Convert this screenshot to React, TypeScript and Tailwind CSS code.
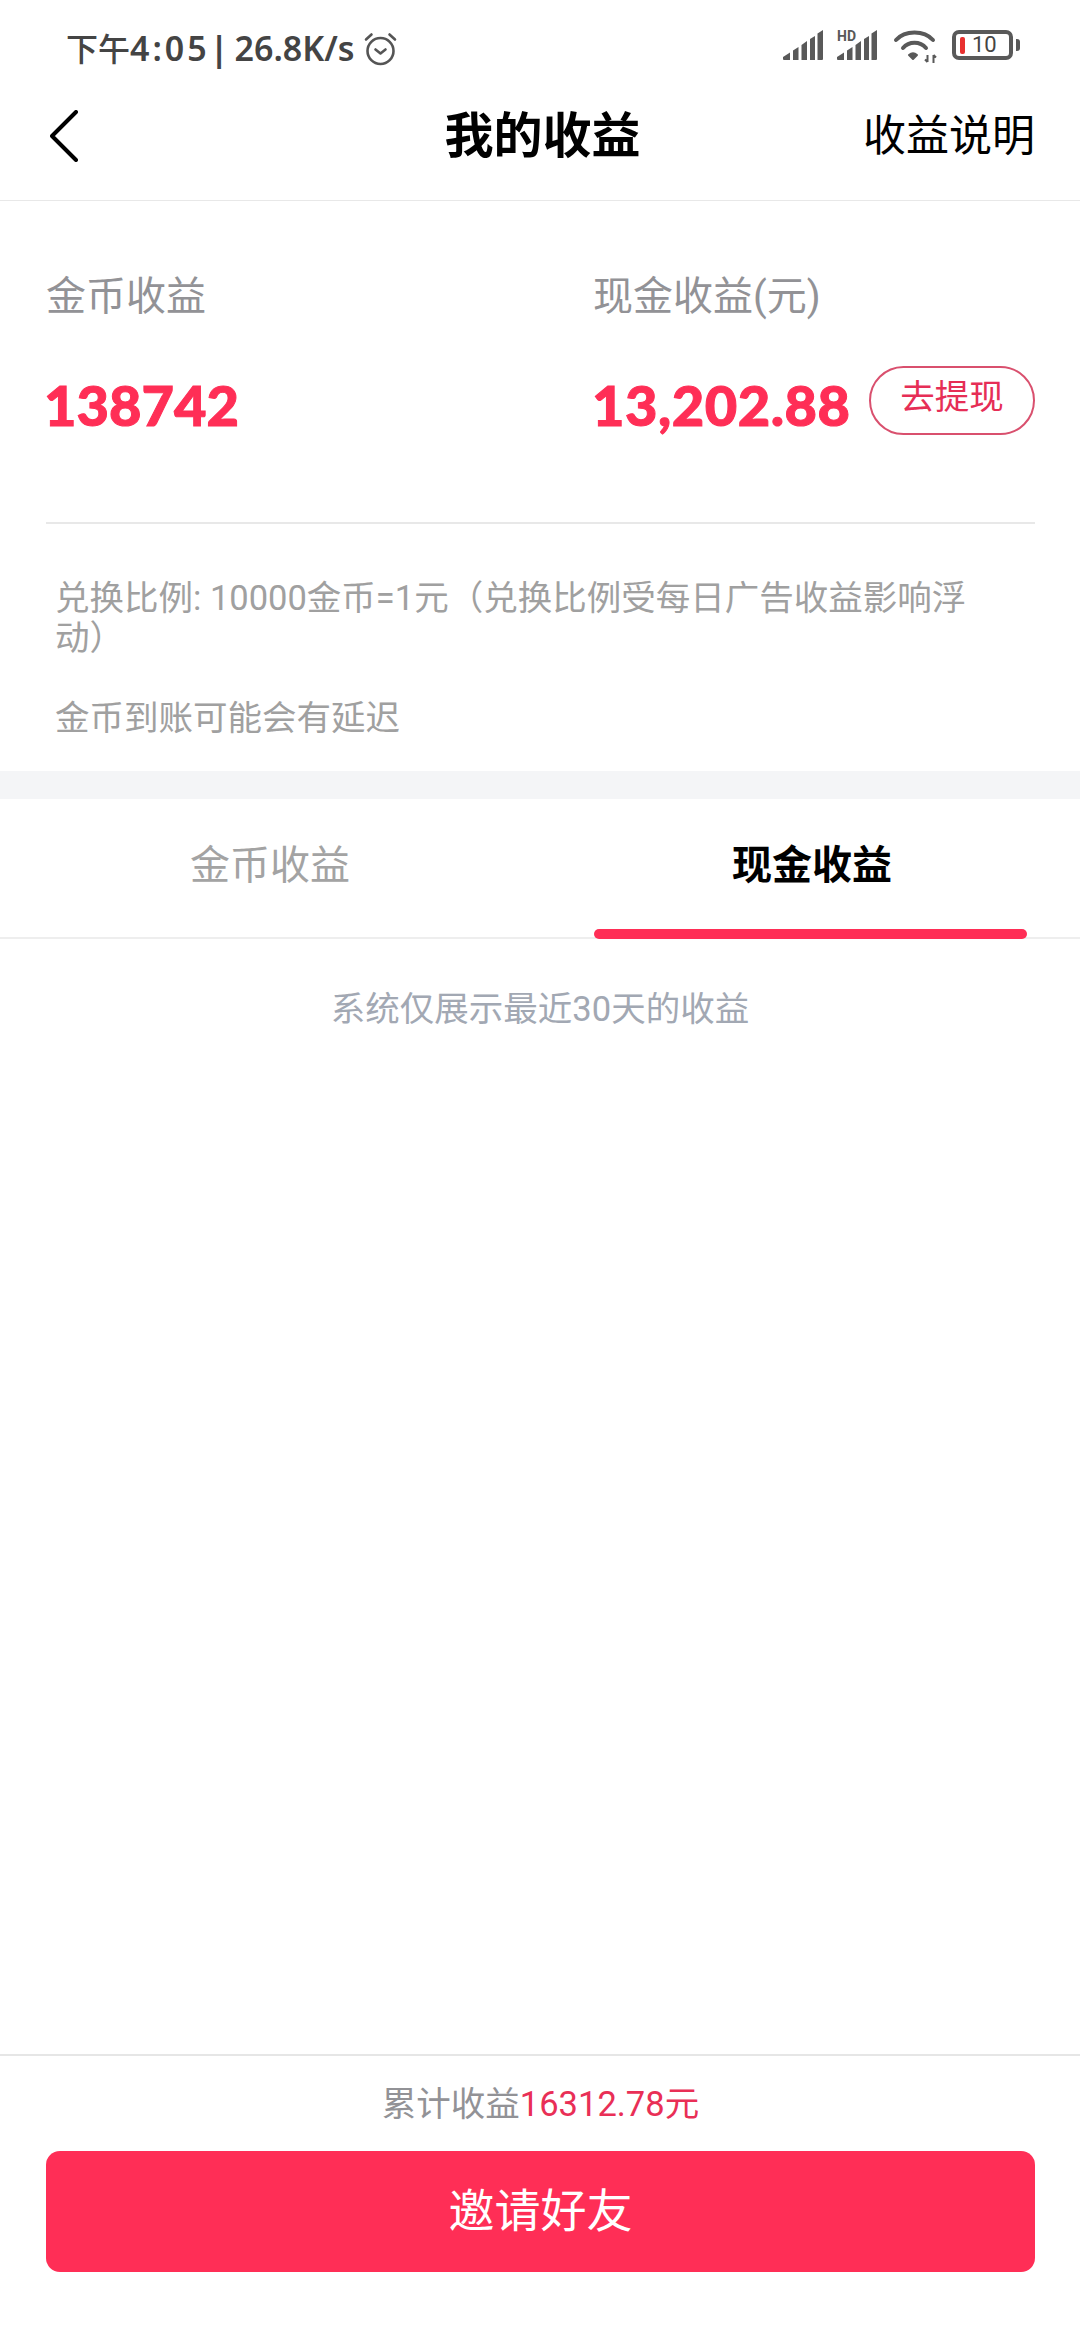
const cjk = "font-['Roboto','Noto_Sans_CJK_SC',sans-serif]";
const amount = "font-['Lato',sans-serif] text-[56px] font-black leading-[60px] text-[#ff2e56] [-webkit-text-stroke:1px_#ff2e56]";

function SignalBars({ hd }: { hd?: boolean }) {
  return (
    <svg className="overflow-visible" width="40" height="30" viewBox="0 0 40 30" fill="#595959">
      {hd && (
        <text x="0" y="11" fontSize="14" fontWeight="700" fontFamily="Roboto, sans-serif">
          HD
        </text>
      )}
      <path d="M0 27l7-4.500V30H1a1 1 0 0 1-1-1z" />
      <path d="M10 20.500l5.500-3.500V30H10z" />
      <path d="M18.500 15l5.500-4V30h-5.500z" />
      <path d="M27 9l5-3V30h-5z" />
      <path d="M34.500 3.500 40 0v29a1 1 0 0 1-1 1h-4.500z" />
    </svg>
  );
}

function Wifi() {
  return (
    <svg width="44" height="34" viewBox="0 0 44 34" fill="none" stroke="#595959" strokeWidth="4" strokeLinecap="round">
      <path d="M3 10C12 0 31 0 40 10" />
      <path d="M10 18C16 11 27 11 33 18" />
      <path d="M20 29l-4-4c2.500-2 5.500-2 8 0z" fill="#595959" strokeWidth="2" strokeLinejoin="round" />
      <path d="M34.500 25v7M40.500 25v8M34.500 32l-2.500-2.500M40.500 25l2.500 2.500" strokeWidth="2" strokeLinecap="butt" />
    </svg>
  );
}

function Battery() {
  return (
    <div className="flex items-center gap-[3px]">
      <div className="relative flex h-[30px] w-[61px] items-center rounded-[7px] border-[4px] border-[#595959] pl-[4px]">
        <div className="h-[17px] w-[5px] rounded-[2px] bg-[#e8302f]" />
        <span className="ml-[7px] font-['Roboto',sans-serif] text-[22px] leading-none text-[#444444]">10</span>
      </div>
      <div className="h-[12px] w-[4px] rounded-r-[3px] bg-[#595959]" />
    </div>
  );
}

function Alarm() {
  return (
    <svg width="35" height="34" viewBox="0 0 35 34" fill="none" stroke="#555555" strokeWidth="2.600" strokeLinecap="round" strokeLinejoin="round">
      <circle cx="17.500" cy="19" r="13" />
      <path d="M12.500 17.500l5 4 5-4" />
      <path d="M3 7.500 8.500 2.500M32 7.500 26.500 2.500" />
    </svg>
  );
}

function StatusBar() {
  return (
    <div className="flex h-[74px] shrink-0 items-start justify-between pl-[66px] pr-[60px] pt-[30px]">
      <div className="flex items-center">
        <span className="flex items-baseline font-['Noto_Sans','Noto_Sans_CJK_SC',sans-serif] text-[34px] font-semibold leading-[36px] text-[#444444]">
          <span className="text-[32px] font-medium">下午</span>
          <span className="tracking-[3px]">4:05</span>
          <span className="mr-[6px] font-bold">|</span>
          <span>26.8K/s</span>
        </span>
        <span className="ml-[8px]">
          <Alarm />
        </span>
      </div>
      <div className="flex items-start">
        <SignalBars />
        <span className="ml-[14px]">
          <SignalBars hd />
        </span>
        <span className="ml-[16px]">
          <Wifi />
        </span>
        <span className="ml-[15px]">
          <Battery />
        </span>
      </div>
    </div>
  );
}

function NavBar() {
  return (
    <div className="flex h-[127px] shrink-0 items-center border-b border-[#e8e8e8] pl-[50px] pr-[45px] pb-[2px]">
      <div className="flex-1">
        <svg width="28" height="52" viewBox="0 0 28 52" fill="none" stroke="#000000" strokeWidth="4" strokeLinecap="round" strokeLinejoin="round">
          <path d="M26 2 2 26l24 24" />
        </svg>
      </div>
      <h1 className={`${cjk} text-[49px] font-bold leading-none text-black`}>我的收益</h1>
      <div className={`${cjk} flex-1 text-right text-[43px] leading-none text-black`}>收益说明</div>
    </div>
  );
}

function Earnings() {
  return (
    <div className="pl-[46px] pr-[45px]">
      <div className="grid grid-cols-[547px_1fr] pt-[72px]">
        <div>
          <div className={`${cjk} text-[40px] leading-[48px] text-[#929296]`}>金币收益</div>
          <div className={`mt-[54px] -ml-[2px] ${amount}`}>138742</div>
        </div>
        <div>
          <div className={`${cjk} text-[40px] leading-[48px] text-[#929296]`}>现金收益(元)</div>
          <div className="mt-[54px] flex h-[60px] items-center justify-between">
            <span className={`-ml-[1px] tracking-[0.5px] ${amount}`}>13,202.88</span>
            <button className={`${cjk} mb-[10px] h-[69px] w-[166px] shrink-0 rounded-full border-2 border-[#d9506e] pb-[6px] text-[34.500px] leading-[40px] text-[#e62e56]`}>
              去提现
            </button>
          </div>
        </div>
      </div>
      <div className="mt-[87px] h-[2px] bg-[#e8e8e8]" />
    </div>
  );
}

function Notes() {
  return (
    <div className={`${cjk} pl-[55px] pr-[90px] pt-[54px] text-[34.500px] leading-[40px] text-[#a0a0a0]`}>
      <p>兑换比例: 10000金币=1元（兑换比例受每日广告收益影响浮动）</p>
      <p className="mt-[40px]">金币到账可能会有延迟</p>
    </div>
  );
}

function Tabs() {
  return (
    <div className="grid h-[140px] shrink-0 grid-cols-2 border-b-2 border-[#eeeeee]">
      <div className={`${cjk} pt-[43px] pl-[190px] text-[40px] leading-[48px] text-[#a3a3a3]`}>金币收益</div>
      <div className="relative">
        <div className={`${cjk} pt-[43px] pl-[192px] text-[40px] font-bold leading-[48px] text-black`}>现金收益</div>
        <div className="absolute bottom-[-2px] left-[54px] h-[10px] w-[433px] rounded-full bg-[#ff2e56]" />
      </div>
    </div>
  );
}

export default function App() {
  return (
    <div className="flex h-[2340px] w-[1080px] flex-col overflow-hidden bg-white">
      <StatusBar />
      <NavBar />
      <Earnings />
      <Notes />
      <div className="mt-[33px] h-[28px] shrink-0 bg-[#f4f5f7]" />
      <Tabs />
      <div className="flex-1">
        <p className={`${cjk} pt-[50px] text-center text-[34.500px] leading-[40px] text-[#a2a8b3]`}>系统仅展示最近30天的收益</p>
      </div>
      <div className="h-[286px] shrink-0 border-t-2 border-[#e6e6e6] pl-[46px] pr-[45px] pt-[28px]">
        <p className={`${cjk} text-center text-[34.500px] leading-[40px] text-[#929296]`}>
          累计收益<span className="text-[#e92f56]">16312.78元</span>
        </p>
        <button className={`${cjk} mt-[27px] flex h-[121px] w-full items-center justify-center rounded-[14px] bg-[#ff2e56] text-[46px] text-white`}>
          邀请好友
        </button>
      </div>
    </div>
  );
}
